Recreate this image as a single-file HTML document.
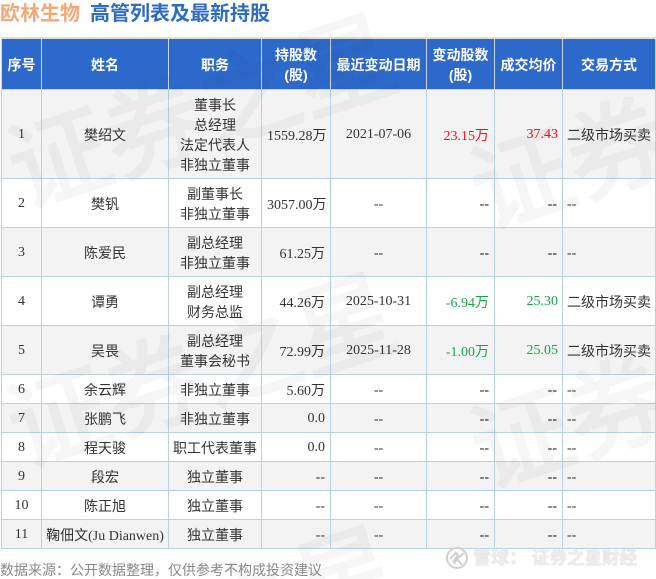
<!DOCTYPE html>
<html lang="zh"><head><meta charset="utf-8"><title>欧林生物 高管列表及最新持股</title>
<style>
html,body{margin:0;padding:0;background:#fff;width:656px;height:579px;overflow:hidden}
#p{position:relative;width:656px;height:579px;overflow:hidden;font-family:"Liberation Serif","WenQuanYi Zen Hei","Noto Sans CJK SC",serif;color:#333}
.t{position:absolute;top:0;font:bold 20px/28px "Liberation Sans","Noto Sans CJK SC",sans-serif;white-space:nowrap}
table{position:absolute;left:1px;top:37px;border-collapse:collapse;table-layout:fixed;width:654px;font-size:14px;line-height:20px;background:#fff}
td,th{border:1px solid #b7d2e8;padding:6px 5px 0;text-align:center;overflow:hidden;white-space:nowrap;box-sizing:border-box}
th{background:#2d69cb;color:#fff;font:bold 14px/20px "Liberation Sans","Noto Sans CJK SC",sans-serif;border-color:#c9d6e0;border-top:2px solid #ddd;padding:2px 0 0}
tr.g td{background:#f3f3f3}
td.l{padding-left:0;padding-right:0;text-align:center}
td.r{text-align:right}
td.f{text-align:left;padding-left:4px}
.red{color:#ff0a1a}.grn{color:#18a548}.up{position:relative;top:-2px}
.u{position:relative;top:-1px}
.d{color:#111}
.wm{position:absolute;left:0;top:0;mix-blend-mode:multiply}
.wm text{font:100px "Liberation Sans","Noto Sans CJK SC",sans-serif;fill:#f6f6f6;stroke:#f6f6f6;stroke-width:2.5px;text-anchor:middle}
.foot{position:absolute;left:0;top:561px;font:14px/18px "Liberation Sans","Noto Sans CJK SC",sans-serif;color:#888;white-space:nowrap}
.xq{position:absolute;top:546px;font:bold 18px/24px "Liberation Sans","Noto Sans CJK SC",sans-serif;color:#ececec;text-shadow:0 0 1px #c4c4c4;white-space:nowrap}
.lg{position:absolute;left:445px;top:546px}
</style></head><body><div id="p">
<div class="t" style="left:0;color:#f6a777">欧林生物</div>
<div class="t" style="left:90px;color:#2d6cc0">高管列表及最新持股</div>
<table>
<colgroup><col style="width:40px"><col style="width:127px"><col style="width:93px"><col style="width:69px"><col style="width:96px"><col style="width:68px"><col style="width:68px"><col style="width:93px"></colgroup>
<tr style="height:51px"><th>序号</th><th>姓名</th><th>职务</th><th>持股数<br>(股)</th><th>最近变动日期</th><th>变动股数<br>(股)</th><th>成交均价</th><th>交易方式</th></tr>
<tr class="g" style="height:89px"><td class="l"><span class="up">1</span></td><td class="l">樊绍文</td><td class="l">董事长<br>总经理<br>法定代表人<br>非独立董事</td><td class="r">1559.28万</td><td class="l"><span class="up">2021-07-06</span></td><td class="r red">23.15万</td><td class="r red" style="padding-right:4px"><span class="up">37.43</span></td><td class="f">二级市场买卖</td></tr>
<tr style="height:49px"><td class="l"><span class="up">2</span></td><td class="l">樊钒</td><td class="l">副董事长<br>非独立董事</td><td class="r">3057.00万</td><td class="l"><span class="u">--</span></td><td class="r d"><span class="u">--</span></td><td class="r d"><span class="u">--</span></td><td class="f"><span class="u">--</span></td></tr>
<tr class="g" style="height:49px"><td class="l"><span class="up">3</span></td><td class="l">陈爱民</td><td class="l">副总经理<br>非独立董事</td><td class="r">61.25万</td><td class="l"><span class="u">--</span></td><td class="r d"><span class="u">--</span></td><td class="r d"><span class="u">--</span></td><td class="f"><span class="u">--</span></td></tr>
<tr style="height:49px"><td class="l"><span class="up">4</span></td><td class="l">谭勇</td><td class="l">副总经理<br>财务总监</td><td class="r">44.26万</td><td class="l"><span class="up">2025-10-31</span></td><td class="r grn">-6.94万</td><td class="r grn" style="padding-right:4px"><span class="up">25.30</span></td><td class="f">二级市场买卖</td></tr>
<tr class="g" style="height:49px"><td class="l"><span class="up">5</span></td><td class="l">吴畏</td><td class="l">副总经理<br>董事会秘书</td><td class="r">72.99万</td><td class="l"><span class="up">2025-11-28</span></td><td class="r grn">-1.00万</td><td class="r grn" style="padding-right:4px"><span class="up">25.05</span></td><td class="f">二级市场买卖</td></tr>
<tr style="height:29px"><td class="l"><span class="up">6</span></td><td class="l">余云辉</td><td class="l">非独立董事</td><td class="r">5.60万</td><td class="l"><span class="u">--</span></td><td class="r d"><span class="u">--</span></td><td class="r d"><span class="u">--</span></td><td class="f"><span class="u">--</span></td></tr>
<tr class="g" style="height:29px"><td class="l"><span class="up">7</span></td><td class="l">张鹏飞</td><td class="l">非独立董事</td><td class="r"><span class="up">0.0</span></td><td class="l"><span class="u">--</span></td><td class="r d"><span class="u">--</span></td><td class="r d"><span class="u">--</span></td><td class="f"><span class="u">--</span></td></tr>
<tr style="height:29px"><td class="l"><span class="up">8</span></td><td class="l">程天骏</td><td class="l">职工代表董事</td><td class="r"><span class="up">0.0</span></td><td class="l"><span class="u">--</span></td><td class="r d"><span class="u">--</span></td><td class="r d"><span class="u">--</span></td><td class="f"><span class="u">--</span></td></tr>
<tr class="g" style="height:29px"><td class="l"><span class="up">9</span></td><td class="l">段宏</td><td class="l">独立董事</td><td class="r"><span class="u">--</span></td><td class="l"><span class="u">--</span></td><td class="r d"><span class="u">--</span></td><td class="r d"><span class="u">--</span></td><td class="f"><span class="u">--</span></td></tr>
<tr style="height:29px"><td class="l"><span class="up">10</span></td><td class="l">陈正旭</td><td class="l">独立董事</td><td class="r"><span class="u">--</span></td><td class="l"><span class="u">--</span></td><td class="r d"><span class="u">--</span></td><td class="r d"><span class="u">--</span></td><td class="f"><span class="u">--</span></td></tr>
<tr class="g" style="height:29px"><td class="l"><span class="up">11</span></td><td class="l">鞠佃文(Ju Dianwen)</td><td class="l">独立董事</td><td class="r"><span class="u">--</span></td><td class="l"><span class="u">--</span></td><td class="r d"><span class="u">--</span></td><td class="r d"><span class="u">--</span></td><td class="f"><span class="u">--</span></td></tr>
</table>
<svg class="wm" width="656" height="579" viewBox="0 0 656 579">
<text transform="translate(202,113) rotate(-18)" y="35">证券之星</text>
<text transform="translate(665,134) rotate(-18)" y="35">证券之星</text>
<text transform="translate(202,372) rotate(-18)" y="35">证券之星</text>
<text transform="translate(665,393) rotate(-18)" y="35">证券之星</text>
<text transform="translate(202,625) rotate(-18)" y="35">证券之星</text>
</svg>
<div class="foot">数据来源：公开数据整理，仅供参考不构成投资建议</div>
<svg class="lg" width="24" height="24" viewBox="0 0 24 24" fill="none" stroke="#d0d0d0" stroke-width="2"><circle cx="12" cy="12" r="10"/><path d="M5 13 L11 7 M8 16 L13 9 L10 6 M19 7 L12 13 L17 19 M12 13 L9 18"/></svg>
<div class="xq" style="left:473px">雪球：</div>
<div class="xq" style="left:532px;font-size:17.5px">证券之星财经</div>
</div></body></html>
